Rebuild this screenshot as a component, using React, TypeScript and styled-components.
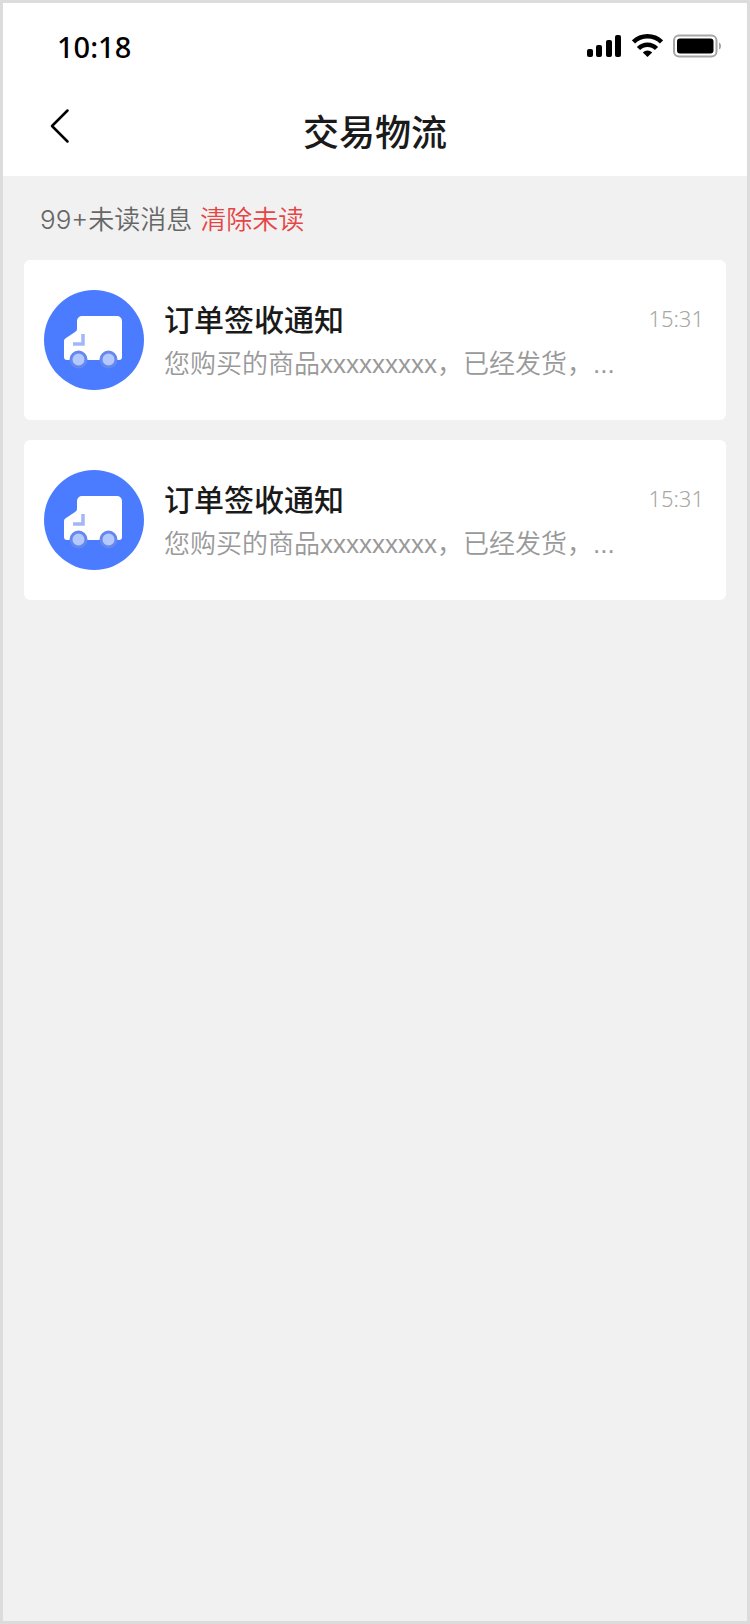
import React from 'react';
import styled, { createGlobalStyle } from 'styled-components';

const GlobalStyle = createGlobalStyle`
  *, *::before, *::after { box-sizing: border-box; }
  body {
    margin: 0;
    background: #f1f1f1;
    font-family: Inter, "Noto Sans CJK SC", sans-serif;
    color: #1a1a1a;
  }
  h1, h2, p { margin: 0; }
`;

const Screen = styled.div`
  display: flex;
  flex-direction: column;
  min-height: 100vh;
  border: 3px solid #dcdcdc;
  background: #f1f1f1;
`;

const Header = styled.header`
  background: #fff;
`;

const StatusBar = styled.div`
  display: flex;
  align-items: center;
  justify-content: space-between;
  height: 86px;
  padding: 0 25px 0 54px;
`;

const Clock = styled.time`
  padding-top: 2px;
  font: 500 29px/40px "Noto Sans", sans-serif;
  color: #000;
`;

const StatusIcons = styled.div`
  display: flex;
  align-items: center;
  gap: 10px;
`;

const NavBar = styled.div`
  display: grid;
  grid-template-columns: 88px 1fr 88px;
  align-items: center;
  height: 87px;
`;

const BackButton = styled.button`
  display: flex;
  align-items: center;
  height: 72px;
  padding: 0 0 14px 46px;
  border: 0;
  background: none;
  cursor: pointer;
`;

const PageTitle = styled.h1`
  font-size: 36px;
  line-height: 52px;
  font-weight: 500;
  text-align: center;
`;

const Content = styled.main`
  padding: 0 21px;
`;

const UnreadBar = styled.div`
  display: flex;
  align-items: center;
  gap: 8px;
  height: 84px;
  padding: 4px 16px 0;
  font-size: 26px;
  line-height: 40px;
  font-weight: 350;
  color: #666;
`;

const ClearButton = styled.button`
  padding: 0;
  border: 0;
  background: none;
  font: inherit;
  color: #e64545;
  cursor: pointer;
`;

const MessageList = styled.ul`
  display: flex;
  flex-direction: column;
  gap: 20px;
  margin: 0;
  padding: 0;
  list-style: none;
`;

const Card = styled.li`
  display: flex;
  align-items: center;
  gap: 20px;
  height: 160px;
  padding: 0 22px 0 20px;
  border-radius: 6px;
  background: #fff;
`;

const Body = styled.div`
  flex: 1;
  min-width: 0;
  padding-top: 4px;
`;

const TitleRow = styled.div`
  display: flex;
  align-items: flex-start;
  justify-content: space-between;
`;

const CardTitle = styled.h2`
  font-size: 30px;
  line-height: 44px;
  font-weight: 500;
`;

const Sent = styled.time`
  font: 300 22px/40px "Noto Sans", sans-serif;
  color: #a6a6a6;
`;

const Summary = styled.p`
  overflow: hidden;
  font-family: "Liberation Sans", "Noto Sans CJK SC", sans-serif;
  font-size: 26px;
  line-height: 44px;
  font-weight: 350;
  color: #999;
  white-space: nowrap;
`;

const SignalIcon = () => (
  <svg width="35" height="24" viewBox="0 0 35 24" aria-hidden="true">
    <rect x="0" y="15" width="6" height="8" rx="2" />
    <rect x="9" y="11" width="6" height="12" rx="2" />
    <rect x="19" y="6" width="6" height="17" rx="2" />
    <rect x="28" y="1" width="6" height="22" rx="2" />
  </svg>
);

const WifiIcon = () => (
  <svg width="31" height="24" viewBox="0 0 31 24" fill="none" stroke="#000" aria-hidden="true">
    <path d="M1.500 8a20 20 0 0 1 28 0" strokeWidth="4.500" />
    <path d="M6.500 14.500a12.500 12.500 0 0 1 18 0" strokeWidth="4.500" />
    <path d="M15.500 23l-4.700-4.600a7 7 0 0 1 9.400 0z" fill="#000" stroke="none" />
  </svg>
);

const BatteryIcon = () => (
  <svg width="49" height="24" viewBox="0 0 49 24" aria-hidden="true">
    <rect x="1" y="1.500" width="42.500" height="21" rx="5" fill="none" stroke="#a6a6a6" strokeWidth="2" />
    <rect x="4" y="4.500" width="36.500" height="15" rx="3" />
    <path d="M46 8.500c2.800 1 2.800 6 0 7z" fill="#a6a6a6" />
  </svg>
);

const BackIcon = () => (
  <svg width="22" height="36" viewBox="0 0 22 36" fill="none" stroke="#000" strokeWidth="2.500" strokeLinecap="round" strokeLinejoin="round" aria-hidden="true">
    <path d="M18.500 2.500L3 18l15.500 15.500" />
  </svg>
);

const TruckIcon = () => (
  <svg width="100" height="100" viewBox="0 0 100 100" aria-hidden="true">
    <circle cx="50" cy="50" r="50" fill="#4b7bff" />
    <path
      d="M33 31a5 5 0 0 1 5-5h35a5 5 0 0 1 5 5v36a3 3 0 0 1-3 3H23a3 3 0 0 1-3-3V51q0-2 2-3l9-6q2-1 2-3z"
      fill="#fff"
    />
    <path d="M39 44v10H29" fill="none" stroke="#a3b6f6" strokeWidth="3.500" />
    <circle cx="34.500" cy="69.500" r="7.500" fill="#b3c8ff" stroke="#6488ee" strokeWidth="3" />
    <circle cx="64.500" cy="69.500" r="7.500" fill="#b3c8ff" stroke="#6488ee" strokeWidth="3" />
  </svg>
);

const messages = [
  { id: 1, title: '订单签收通知', time: '15:31', summary: '您购买的商品xxxxxxxxx，已经发货，...' },
  { id: 2, title: '订单签收通知', time: '15:31', summary: '您购买的商品xxxxxxxxx，已经发货，...' },
];

export default function App() {
  return (
    <>
      <GlobalStyle />
      <Screen>
        <Header>
          <StatusBar>
            <Clock>10:18</Clock>
            <StatusIcons>
              <SignalIcon />
              <WifiIcon />
              <BatteryIcon />
            </StatusIcons>
          </StatusBar>
          <NavBar>
            <BackButton type="button" aria-label="返回">
              <BackIcon />
            </BackButton>
            <PageTitle>交易物流</PageTitle>
          </NavBar>
        </Header>
        <Content>
          <UnreadBar>
            <span>99+未读消息</span>
            <ClearButton type="button">清除未读</ClearButton>
          </UnreadBar>
          <MessageList>
            {messages.map((message) => (
              <Card key={message.id}>
                <TruckIcon />
                <Body>
                  <TitleRow>
                    <CardTitle>{message.title}</CardTitle>
                    <Sent>{message.time}</Sent>
                  </TitleRow>
                  <Summary>{message.summary}</Summary>
                </Body>
              </Card>
            ))}
          </MessageList>
        </Content>
      </Screen>
    </>
  );
}
